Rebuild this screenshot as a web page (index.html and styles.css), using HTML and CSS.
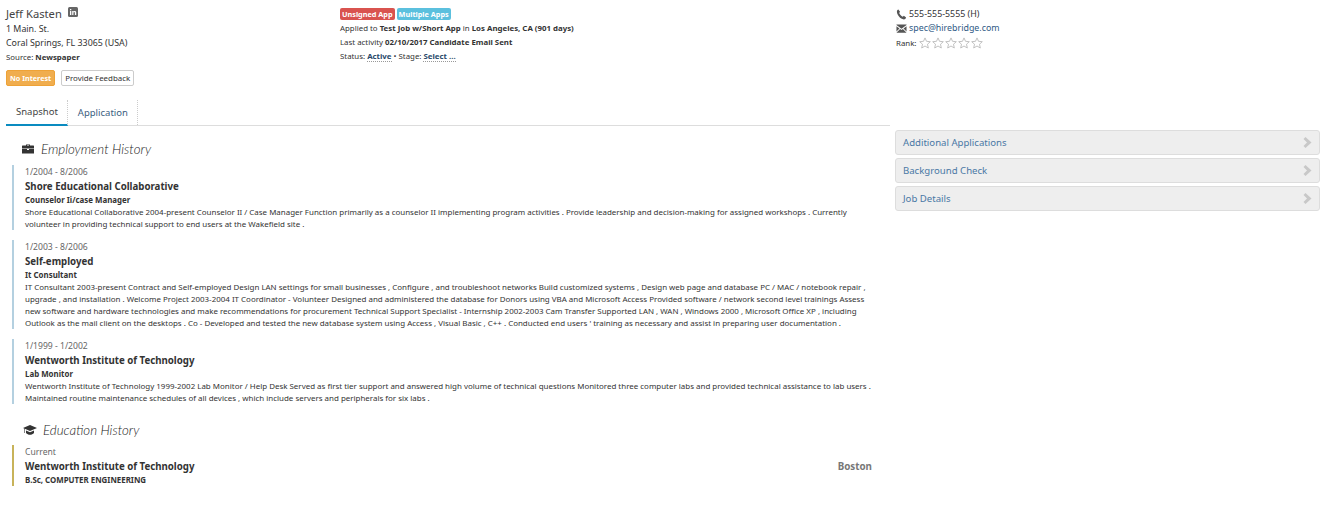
FILE: index.html
```html
<!DOCTYPE html>
<html lang="en">
<head>
    <meta charset="UTF-8">
    <title>Candidate</title>
    <link rel="stylesheet" href="styles.css">
</head>
<body>
    <div class="header">
        <div class="col-person">
            <div class="name">Jeff Kasten
                <svg class="linkedin" viewBox="0 0 10 10"><rect width="10" height="10" rx="1.5" fill="#666"/><path d="M2 4h1.3v4H2zM2 2h1.3v1.2H2zM4.2 4h1.2v.6c.3-.5.8-.7 1.3-.7 1 0 1.5.6 1.5 1.7V8H6.900V5.900c0-.6-.2-.9-.7-.9s-.8.4-.8 1v2H4.200z" fill="#fff"/></svg>
            </div>
            <div class="line">1 Main. St.</div>
            <div class="line">Coral Springs, FL 33065 (USA)</div>
            <div class="line small">Source: <b>Newspaper</b></div>
            <div class="actions">
                <span class="btn btn-orange">No Interest</span>
                <span class="btn btn-plain">Provide Feedback</span>
            </div>
        </div>
        <div class="col-job">
            <div class="labels">
                <span class="label red">Unsigned App</span>
                <span class="label blue">Multiple Apps</span>
            </div>
            <div class="line small">Applied to <b>Test Job w/Short App</b> in <b>Los Angeles, CA (901 days)</b></div>
            <div class="line small">Last activity <b>02/10/2017 Candidate Email Sent</b></div>
            <div class="line small">Status: <b class="editable">Active</b> &bull; Stage: <b class="editable">Select ...</b></div>
        </div>
        <div class="col-contact">
            <div class="line contact">
                <svg class="ico" viewBox="0 0 12 12"><path d="M2.600.6 4.400 3 3.500 4.400c.5 1.600 2 3.200 3.800 4l1.300-1L11 9.200c-.3 1.100-1.300 2.200-2.400 2.200C4.800 11 .8 6.500 1 2.500 1 1.600 1.700.9 2.600.6z" fill="#555"/></svg>
                555-555-5555 (H)
            </div>
            <div class="line contact">
                <svg class="ico" viewBox="0 0 12 12"><path d="M.5 1.500h11v.8L6 6.400.5 2.300zM.5 3.600l3.300 2.400L.5 9.200zM11.500 3.600 8.200 6l3.300 3.200zM4.500 6.600 6 7.600l1.500-1 4 3.900H.5z" fill="#555"/></svg>
                <span class="link">spec@hirebridge.com</span>
            </div>
            <div class="rank">
                <span class="small">Rank:</span>
                <span class="stars">
                    <svg viewBox="0 0 12 12"><path id="star" d="M6 .9 7.500 4.300 11.300 4.700 8.500 7.200 9.300 11 6 9 2.700 11 3.500 7.200.7 4.700 4.500 4.300z" fill="#fff" stroke="#bbb" stroke-width=".9"/></svg>
                    <svg viewBox="0 0 12 12"><use href="#star"/></svg>
                    <svg viewBox="0 0 12 12"><use href="#star"/></svg>
                    <svg viewBox="0 0 12 12"><use href="#star"/></svg>
                    <svg viewBox="0 0 12 12"><use href="#star"/></svg>
                </span>
            </div>
        </div>
    </div>

    <div class="main">
        <div class="content">
            <div class="tabs">
                <div class="tab active">Snapshot</div>
                <div class="tab">Application</div>
            </div>

            <h2 class="section-title">
                <svg class="section-ico" viewBox="0 0 12 10"><path d="M4 1.500V.5h4v1h3.500c.3 0 .5.200.5.500v2.500H0V2c0-.3.200-.5.500-.5zM5 1.500h2V1H5zM0 5h5v1h2V5h5v4.500H0z" fill="#333"/></svg>
                Employment History
            </h2>
            <div class="entry">
                <div class="dates">1/2004 - 8/2006</div>
                <div class="org">Shore Educational Collaborative</div>
                <div class="role">Counselor Ii/case Manager</div>
                <div class="desc">Shore Educational Collaborative 2004-present Counselor II / Case Manager Function primarily as a counselor II implementing program activities . Provide leadership and decision-making for assigned workshops . Currently volunteer in providing technical support to end users at the Wakefield site .</div>
            </div>
            <div class="entry">
                <div class="dates">1/2003 - 8/2006</div>
                <div class="org">Self-employed</div>
                <div class="role">It Consultant</div>
                <div class="desc">IT Consultant 2003-present Contract and Self-employed Design LAN settings for small businesses , Configure , and troubleshoot networks Build customized systems , Design web page and database PC / MAC / notebook repair , upgrade , and installation . Welcome Project 2003-2004 IT Coordinator - Volunteer Designed and administered the database for Donors using VBA and Microsoft Access Provided software / network second level trainings Assess new software and hardware technologies and make recommendations for procurement Technical Support Specialist - Internship 2002-2003 Cam Transfer Supported LAN , WAN , Windows 2000 , Microsoft Office XP , including Outlook as the mail client on the desktops . Co - Developed and tested the new database system using Access , Visual Basic , C++ . Conducted end users ' training as necessary and assist in preparing user documentation .</div>
            </div>
            <div class="entry">
                <div class="dates">1/1999 - 1/2002</div>
                <div class="org">Wentworth Institute of Technology</div>
                <div class="role">Lab Monitor</div>
                <div class="desc">Wentworth Institute of Technology 1999-2002 Lab Monitor / Help Desk Served as first tier support and answered high volume of technical questions Monitored three computer labs and provided technical assistance to lab users . Maintained routine maintenance schedules of all devices , which include servers and peripherals for six labs .</div>
            </div>

            <h2 class="section-title edu-title">
                <svg class="edu-ico" viewBox="0 0 14 10"><path d="M7 0 14 3 7 6 0 3zM3 5.500 7 7.200 11 5.500V8c-1 1.200-2.500 1.800-4 1.800S4 9.200 3 8zM1 3.800h.6V8H1z" fill="#333"/></svg>
                Education History
            </h2>
            <div class="entry edu">
                <div class="dates">Current</div>
                <div class="org org-row"><span>Wentworth Institute of Technology</span><span class="city">Boston</span></div>
                <div class="role">B.Sc, COMPUTER ENGINEERING</div>
            </div>
        </div>

        <div class="side">
            <div class="panel">Additional Applications<svg class="chev" viewBox="0 0 9 11"><path d="M2.500 0 8.500 5.500 2.500 11 .5 9 4 5.500.5 2z"/></svg></div>
            <div class="panel">Background Check<svg class="chev" viewBox="0 0 9 11"><path d="M2.500 0 8.500 5.500 2.500 11 .5 9 4 5.500.5 2z"/></svg></div>
            <div class="panel">Job Details<svg class="chev" viewBox="0 0 9 11"><path d="M2.500 0 8.500 5.500 2.500 11 .5 9 4 5.500.5 2z"/></svg></div>
        </div>
    </div>
</body>
</html>
```

FILE: styles.css
```css
body {
    margin: 0;
    font-family: "Noto Sans", Arial, sans-serif;
    font-size: 9px;
    color: #333;
    background-color: white;
}

.header {
    display: grid;
    grid-template-columns: 334px 556px 1fr;
    padding: 6px 0 0 6px;
    height: 100px;
    box-sizing: border-box;
}

.name {
    font-size: 11.2px;
    line-height: 15px;
    color: #444;
}

.linkedin {
    width: 10px;
    height: 10px;
    margin-left: 3px;
    vertical-align: 1px;
}

.line {
    font-size: 8.85px;
    line-height: 14px;
}

.name + .line {
    margin-top: 1px;
}

.line.small {
    font-size: 7.85px;
    line-height: 14px;
}

.small {
    font-size: 7.85px;
}

.actions {
    margin-top: 6px;
    display: flex;
    gap: 6px;
}

.btn {
    font-size: 7.9px;
    line-height: 14px;
    padding: 0 3px;
    border-radius: 2px;
}

.btn-orange {
    background-color: #f0ad4e;
    border: 1px solid #eea236;
    color: white;
    font-size: 7.2px;
    font-weight: bold;
}

.btn-plain {
    border: 1px solid #ccc;
    color: #333;
}

.labels {
    display: flex;
    gap: 2px;
    margin: 2px 0 1px;
}

.label {
    font-size: 7.3px;
    font-weight: bold;
    line-height: 12px;
    padding: 0 2px;
    border-radius: 2px;
    color: white;
}

.red {
    background-color: #d9534f;
}

.blue {
    background-color: #5bc0de;
}

.editable {
    color: #2a4a6b;
    border-bottom: 1px dotted #999;
}

.col-contact {
    padding-top: 1px;
}

.contact {
    display: flex;
    align-items: center;
    gap: 2px;
}

.ico {
    width: 11px;
    height: 11px;
}

.link {
    color: #2f5a85;
}

.rank {
    display: flex;
    align-items: center;
    gap: 3px;
    line-height: 16px;
}

.stars {
    display: flex;
    gap: 1px;
}

.stars svg {
    width: 12px;
    height: 12px;
}

.main {
    display: flex;
    align-items: flex-start;
    gap: 5px;
}

.content {
    width: 890px;
    box-sizing: border-box;
    padding-left: 6px;
}

.tabs {
    display: flex;
    border-bottom: 1px solid #ddd;
    height: 25px;
}

.tab {
    font-size: 9.5px;
    line-height: 25px;
    padding: 0 9px 0 10px;
    color: #3b5d80;
    border-right: 1px dotted #ccc;
}

.tab.active {
    color: #444;
    border-bottom: 2px solid #0a8bc0;
    height: 24px;
    line-height: 23px;
}

.section-title {
    font-family: Lato, Arial, sans-serif;
    font-size: 13.3px;
    font-style: italic;
    font-weight: 300;
    color: #222;
    margin: 15px 0 8px 16px;
    line-height: 16px;
    display: flex;
    align-items: center;
    gap: 7px;
}

.section-ico {
    width: 12px;
    height: 10px;
}

.edu-ico {
    width: 14px;
    height: 10px;
}

.edu-title {
    margin-top: 18px;
    margin-bottom: 7px;
    margin-left: 17px;
    gap: 6px;
}

.entry {
    border-left: 2px solid #b4d0e0;
    margin: 0 18px 10px 6px;
    padding-left: 11px;
    padding-top: 1px;
}

.entry.edu {
    border-left-color: #c8b35a;
}

.dates {
    font-size: 8.6px;
    line-height: 13px;
    color: #666;
}

.org {
    font-size: 9.7px;
    font-weight: bold;
    line-height: 15px;
    color: #333;
}

.org-row {
    display: flex;
    justify-content: space-between;
}

.city {
    color: #777;
    font-size: 9.8px;
}

.role {
    font-size: 7.9px;
    font-weight: bold;
    line-height: 12px;
}

.desc {
    font-size: 7.95px;
    line-height: 12px;
}

.side {
    flex: 1;
    margin-right: 11px;
    padding-top: 30px;
}

.panel {
    display: flex;
    justify-content: space-between;
    align-items: center;
    height: 23px;
    margin-bottom: 3px;
    padding: 0 7px;
    background-color: #eee;
    border: 1px solid #ddd;
    border-radius: 3px;
    font-size: 9.6px;
    color: #4a78a5;
}

.chev {
    width: 9px;
    height: 11px;
    fill: #c8c8c8;
}
```
